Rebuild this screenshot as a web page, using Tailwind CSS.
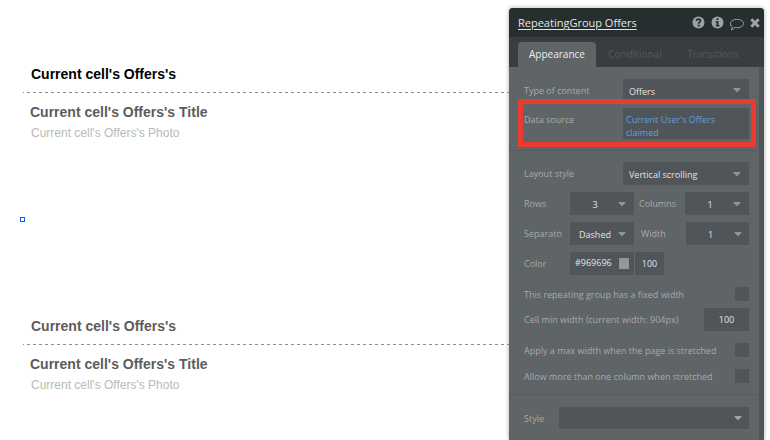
<!DOCTYPE html>
<html lang="en">
<head>
<meta charset="utf-8">
<meta name="viewport" content="width=device-width, initial-scale=1">
<title>RepeatingGroup Offers</title>
<script src="https://cdn.jsdelivr.net/npm/@tailwindcss/browser@4"></script>
</head>
<body class="bg-white">
<svg class="hidden">
  <symbol id="caret" viewBox="0 0 8 4"><path d="M1 0H7Q8 0 7.500 0.700L4.600 3.700Q4 4.200 3.400 3.700L.5 .7Q0 0 1 0Z" fill="currentColor"/></symbol>
</svg>
<div class="flex h-screen overflow-hidden font-['Liberation_Sans',Arial,sans-serif]">

  <main class="min-w-0 flex-1 relative pl-[23px]">
    <section class="h-[252px] pt-[65px]">
      <p class="pl-2 text-[14px] leading-[18px] font-bold text-black">Current cell's Offers's</p>
      <div class="mt-[9px] h-px bg-[repeating-linear-gradient(90deg,#8c8c8c_0_1px,transparent_1px_4px,#8c8c8c_4px_6px)]"></div>
      <h2 class="mt-[10px] pl-[7px] text-[14px] leading-[18px] font-bold text-[#5c5c5c]">Current cell's Offers's Title</h2>
      <p class="mt-[3px] pl-2 text-[12px] leading-[18px] text-[#b9b9b9]">Current cell's Offers's Photo</p>
    </section>
    <section class="h-[188px] pt-[65px]">
      <p class="pl-2 text-[14px] leading-[18px] font-bold text-[#5c5c5c]">Current cell's Offers's</p>
      <div class="mt-[9px] h-px bg-[repeating-linear-gradient(90deg,#8c8c8c_0_1px,transparent_1px_4px,#8c8c8c_4px_6px)]"></div>
      <h2 class="mt-[10px] pl-[7px] text-[14px] leading-[18px] font-bold text-[#5c5c5c]">Current cell's Offers's Title</h2>
      <p class="mt-[3px] pl-2 text-[12px] leading-[18px] text-[#b9b9b9]">Current cell's Offers's Photo</p>
    </section>
    <span class="absolute left-[20px] top-[217px] size-[5px] border border-[#0b62ee] bg-white"></span>
  </main>

  <aside class="mt-2 mr-[6px] flex w-[255px] shrink-0 flex-col overflow-hidden rounded-t-[4px] bg-[#5f6467] font-['Open_Sans','Noto_Sans',sans-serif] text-[#a6aaac] shadow-[0_0_4px_rgba(0,0,0,0.35)]">
    <header class="flex h-[29px] shrink-0 items-center bg-[#272e2f] pl-[9px] pr-1 text-[#9da3a5]">
      <h1 class="flex-1 text-[11px] leading-[15px] text-[#e4e6e6] underline underline-offset-2">RepeatingGroup Offers</h1>
      <div class="flex items-center gap-[6px]">
        <button type="button" aria-label="Help"><svg class="block size-[13px]" viewBox="0 0 13 13"><circle cx="6.500" cy="6.500" r="6" fill="currentColor"/><path d="M4.500 5C4.600 2.500 8.500 2.500 8.500 4.700C8.500 6.100 6.600 6.100 6.600 7.700" fill="none" stroke="#272e2f" stroke-width="1.700"/><rect x="5.700" y="8.600" width="1.900" height="1.900" fill="#272e2f"/></svg></button>
        <button type="button" aria-label="Information"><svg class="block size-[13px]" viewBox="0 0 13 13"><circle cx="6.500" cy="6.500" r="6" fill="currentColor"/><path d="M5.500 2.200H7.500V4H5.500ZM4.700 5H7.500V9H8.400V10.400H4.700V9H5.500V6.400H4.700Z" fill="#272e2f"/></svg></button>
        <button type="button" aria-label="Comment"><svg class="block h-[13px] w-[14px] overflow-visible" viewBox="0 0 14 13"><path d="M4.600 11.400C3.700 13 2.500 13.700 1.200 14C2 13 2.300 12 2.200 10.800C-.9 8.800 .1 4.600 4.800 3.600C9.500 2.700 13.500 4.600 13.500 7.500C13.500 10.600 9.200 12.400 4.600 11.400Z" fill="none" stroke="currentColor" stroke-width="1"/></svg></button>
        <button type="button" aria-label="Close"><svg class="block h-[13px] w-[10px]" viewBox="0 0 10 13"><path d="M1.300 3.300L8.700 10.700M8.700 3.300L1.300 10.700" stroke="currentColor" stroke-width="3"/></svg></button>
      </div>
    </header>
    <nav class="flex h-[30px] shrink-0 items-end bg-[#393d40] pl-[9px] text-[10px] leading-[13px] text-[#54595c]">
      <button type="button" class="h-[25px] w-[78px] rounded-t-[4px] bg-[#5f6467] text-[#eceded]">Appearance</button>
      <button type="button" class="h-[25px] w-[78px]">Conditional</button>
      <button type="button" class="h-[25px] w-[78px]">Transitions</button>
    </nav>

    <form class="flex-1 border-r-[5px] border-[#505559] text-[9px] leading-[13px]">
      <div class="border-b border-[#575c5f] px-[10px] pt-3 pl-[15px] pb-[11px]">
        <div class="flex h-[23px] items-center">
          <label for="type" class="w-[99px]">Type of content</label>
          <div class="relative h-full flex-1">
            <select id="type" class="size-full appearance-none bg-[#505559] pt-[2px] pl-[6px] text-[#e2e4e4]"><option>Offers</option></select>
            <svg class="pointer-events-none absolute right-[8px] top-[9px] h-[4px] w-[8px] text-[#8f9496]"><use href="#caret"/></svg>
          </div>
        </div>
        <div class="relative mt-[6px] flex h-[31px]">
          <label for="source" class="w-[99px] pt-[5px]">Data source</label>
          <button type="button" id="source" class="flex-1 bg-[#505559] pt-[5px] pl-[3px] pr-6 text-left text-[#619fdf]">Current User's Offers claimed</button>
          <div class="pointer-events-none absolute -top-[9px] -left-[6px] -right-[7px] h-[48px] border-5 border-[#ea3b30]"></div>
        </div>
      </div>

      <div class="flex flex-col gap-[7px] border-b border-[#575c5f] pt-[11px] pr-[10px] pb-[11px] pl-[15px]">
        <div class="flex h-[23px] items-center">
          <label for="layout" class="w-[99px]">Layout style</label>
          <div class="relative h-full flex-1">
            <select id="layout" class="size-full appearance-none bg-[#505559] pt-[2px] pl-[6px] text-[#e2e4e4]"><option>Vertical scrolling</option></select>
            <svg class="pointer-events-none absolute right-[8px] top-[10px] h-[4px] w-[8px] text-[#8f9496]"><use href="#caret"/></svg>
          </div>
        </div>
        <div class="flex h-[23px] items-center">
          <label for="rows" class="w-[46px]">Rows</label>
          <div class="relative h-full w-[64px]">
            <select id="rows" class="size-full appearance-none bg-[#505559] pt-[2px] pr-[14px] text-center text-[#e2e4e4]"><option>3</option></select>
            <svg class="pointer-events-none absolute right-[8px] top-[10px] h-[4px] w-[8px] text-[#8f9496]"><use href="#caret"/></svg>
          </div>
          <label for="columns" class="flex-1 pl-[5px]">Columns</label>
          <div class="relative h-full w-[64px]">
            <select id="columns" class="size-full appearance-none bg-[#505559] pt-[2px] pr-[14px] text-center text-[#e2e4e4]"><option>1</option></select>
            <svg class="pointer-events-none absolute right-[8px] top-[10px] h-[4px] w-[8px] text-[#8f9496]"><use href="#caret"/></svg>
          </div>
        </div>
        <div class="flex h-[23px] items-center">
          <label for="separator" class="w-[46px]">Separato</label>
          <div class="relative h-full w-[64px]">
            <select id="separator" class="size-full appearance-none bg-[#505559] pt-[2px] pr-[14px] text-center text-[#e2e4e4]"><option>Dashed</option></select>
            <svg class="pointer-events-none absolute right-[8px] top-[10px] h-[4px] w-[8px] text-[#8f9496]"><use href="#caret"/></svg>
          </div>
          <label for="width" class="flex-1 pl-[7px]">Width</label>
          <div class="relative h-full w-[63px]">
            <select id="width" class="size-full appearance-none bg-[#505559] pt-[2px] pr-[14px] text-center text-[#e2e4e4]"><option>1</option></select>
            <svg class="pointer-events-none absolute right-[7px] top-[10px] h-[4px] w-[8px] text-[#8f9496]"><use href="#caret"/></svg>
          </div>
        </div>
        <div class="flex h-[23px] items-center">
          <label for="color" class="w-[46px]">Color</label>
          <div class="flex h-full w-[65px] items-center border-r border-[#6a6765] bg-[#505559] pr-[5px]">
            <input id="color" type="text" value="#969696" class="h-full min-w-0 flex-1 pl-[5px] pb-[2px] text-[#e2e4e4]">
            <button type="button" aria-label="Pick color" class="h-[11px] w-[10px] bg-[#969696]"></button>
          </div>
          <input type="text" aria-label="Opacity" value="100" class="h-full w-[29px] bg-[#505559] text-center text-[#e2e4e4]">
        </div>
        <div class="mt-[5px] flex h-[14px] items-center justify-between">
          <label for="fixed">This repeating group has a fixed width</label>
          <input id="fixed" type="checkbox" class="size-[14px] appearance-none bg-[#505559]">
        </div>
        <div class="flex h-[23px] items-center justify-between">
          <label for="cellmin">Cell min width (current width: 904px)</label>
          <input id="cellmin" type="text" value="100" class="h-full w-[45px] bg-[#505559] text-center text-[#e2e4e4]">
        </div>
        <div class="mt-[5px] flex h-[14px] items-center justify-between">
          <label for="maxw">Apply a max width when the page is stretched</label>
          <input id="maxw" type="checkbox" class="size-[14px] appearance-none bg-[#505559]">
        </div>
        <div class="mt-[5px] flex h-[14px] items-center justify-between">
          <label for="multi">Allow more than one column when stretched</label>
          <input id="multi" type="checkbox" class="size-[14px] appearance-none bg-[#505559]">
        </div>
      </div>

      <div class="flex items-center pt-3 pr-[10px] pl-[15px]">
        <label for="style" class="w-[35px]">Style</label>
        <div class="relative h-[22px] flex-1">
          <select id="style" class="size-full appearance-none bg-[#505559] pl-[6px] text-[#e2e4e4]"><option></option></select>
          <svg class="pointer-events-none absolute right-[7px] top-[9px] h-[4px] w-[8px] text-[#a3a7a9]"><use href="#caret"/></svg>
        </div>
      </div>
    </form>
  </aside>
</div>
</body>
</html>
